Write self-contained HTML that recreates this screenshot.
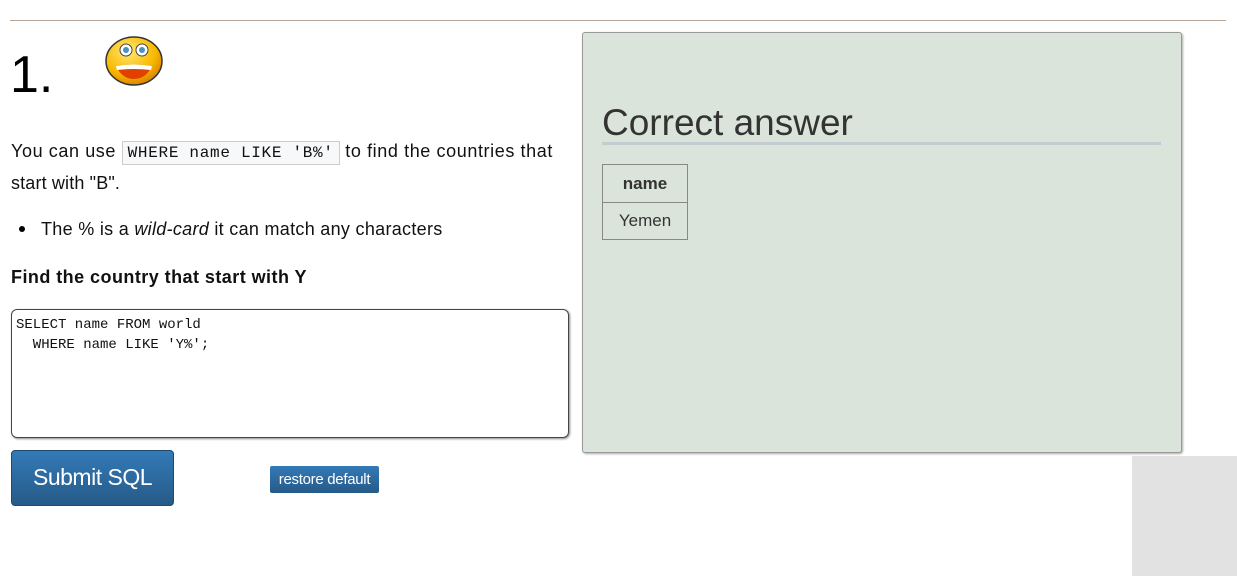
<!DOCTYPE html>
<html><head><style>
body{margin:0;width:1237px;height:576px;position:relative;background:#fff;font-family:"Liberation Sans",sans-serif;overflow:hidden;color:#111}
.abs{position:absolute}
.t{font-size:18px;white-space:nowrap;letter-spacing:0.15px}
code{font-family:"Liberation Mono",monospace;font-size:16px;letter-spacing:0.7px;background:#f7f8fa;border:1px solid #ccc;padding:2px 5px}
</style></head><body>
<div class="abs" style="left:10px;top:20px;width:1216px;height:1px;background:#b9a89a"></div>
<div class="abs" style="left:10px;top:45px;font-size:52px;color:#000">1.</div>
<svg class="abs" style="left:104px;top:35px" width="60" height="52" viewBox="0 0 60 52">
<defs><radialGradient id="g" cx="0.4" cy="0.3" r="0.8"><stop offset="0" stop-color="#ffe870"/><stop offset="0.6" stop-color="#f8b800"/><stop offset="1" stop-color="#d07000"/></radialGradient></defs>
<ellipse cx="30" cy="26" rx="28" ry="24" fill="url(#g)" stroke="#333" stroke-width="1.5"/>
<circle cx="22" cy="15" r="6" fill="#fff" stroke="#444"/><circle cx="38" cy="15" r="6" fill="#fff" stroke="#444"/>
<circle cx="22" cy="15" r="3" fill="#4a90c0"/><circle cx="38" cy="15" r="3" fill="#4a90c0"/>
<path d="M12 31 Q30 28 48 31 Q42 44 30 44 Q18 44 12 31Z" fill="#e04000"/>
<path d="M12 31 Q30 28 48 31 L47 35 Q30 33 13 35Z" fill="#fff"/>
</svg>
<div class="abs t" style="left:11px;top:141px;letter-spacing:0.6px">You can use <code style="letter-spacing:0.7px">WHERE name LIKE 'B%'</code> to find the countries that</div>
<div class="abs t" style="left:11px;top:173px">start with "B".</div>
<div class="abs" style="left:19px;top:226px;width:6px;height:6px;border-radius:50%;background:#000"></div>
<div class="abs t" style="left:41px;top:219px;letter-spacing:0.3px">The % is a <i>wild-card</i> it can match any characters</div>
<div class="abs t" style="left:11px;top:267px;font-weight:bold;letter-spacing:0.45px">Find the country that start with Y</div>
<div class="abs" style="left:11px;top:309px;width:558px;height:129px;border:1px solid #444;border-radius:6px;box-shadow:1px 1px 2px #888;font-family:'Liberation Mono',monospace;font-size:14px;line-height:20px;padding:5px 4px;box-sizing:border-box;white-space:pre">SELECT name FROM world
  WHERE name LIKE 'Y%';</div>
<div class="abs" style="left:11px;top:450px;width:161px;height:54px;border:1px solid #1f4a70;border-radius:4px;background:linear-gradient(#337ab7,#265a88);color:#fff;font-size:23px;text-align:center;line-height:52px;letter-spacing:-0.5px">Submit SQL</div>
<div class="abs" style="left:270px;top:466px;width:109px;height:27px;border-radius:2px;background:linear-gradient(#337ab7,#265a88);color:#fff;font-size:15px;text-align:center;line-height:27px;letter-spacing:-0.3px">restore default</div>
<div class="abs" style="left:582px;top:32px;width:598px;height:419px;border:1px solid #999;border-radius:3px;background:#dae4da;box-shadow:1px 1px 2px #aaa"></div>
<div class="abs" style="left:602px;top:102px;font-size:37px;color:#333">Correct answer</div>
<div class="abs" style="left:602px;top:142px;width:559px;height:3px;background:#c3ccd0"></div>
<table class="abs" style="left:602px;top:164px;border-collapse:collapse;font-size:17px;color:#333">
<tr><th style="border:1px solid #888;width:82px;height:35px;text-align:center">name</th></tr>
<tr><td style="border:1px solid #888;height:34px;text-align:center">Yemen</td></tr></table>
<div class="abs" style="left:1132px;top:456px;width:105px;height:120px;background:#e2e2e2"></div>
</body></html>
